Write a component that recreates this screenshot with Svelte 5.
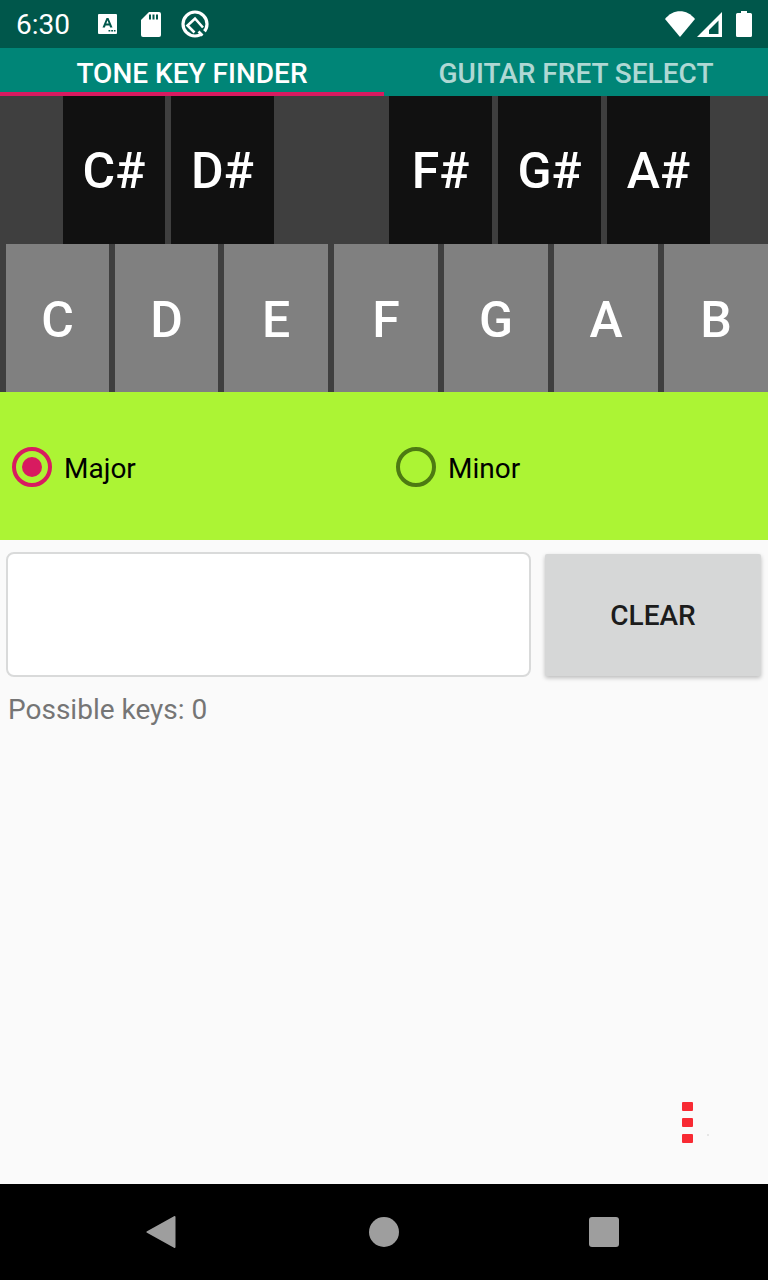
<script lang="ts">
	const blackKeys = ['C#', 'D#', '', 'F#', 'G#', 'A#'];
	const whiteKeys = ['C', 'D', 'E', 'F', 'G', 'A', 'B'];

	let scale = $state('major');
	let picked = $state('');
	let count = $derived(picked ? 1 : 0);
</script>

<div class="screen">
	<div class="status-bar">
		<span class="time">6:30</span>
		<svg class="note-icon" width="19" height="20" viewBox="0 0 19 20">
			<rect width="19" height="20" rx="1" fill="#fff" />
			<path d="M4.500 13.500L8.500 4h2l4 9.500h-2.400l-.7-2H7.600l-.7 2zM8.300 9.500h2.400L9.500 6.300z" fill="#00574b" fill-rule="evenodd" />
			<path d="M10.500 16h1.800v1.500h-1.800zM13.200 16H15v1.500h-1.800zM15.900 16h1.600v1.500h-1.600z" fill="#00574b" />
		</svg>
		<svg class="sd-icon" width="20" height="25" viewBox="0 0 20 25">
			<path d="M8 0h10a2 2 0 0 1 2 2v21a2 2 0 0 1-2 2H2a2 2 0 0 1-2-2V8z" fill="#fff" />
			<path d="M8 2.500h2v5H8zM11.500 2.500h2v5h-2zM15 2.500h2v5h-2z" fill="#00574b" />
		</svg>
		<svg class="q-icon" width="28" height="28" viewBox="0 0 28 28">
			<circle cx="14" cy="14" r="12" fill="none" stroke="#fff" stroke-width="3.200" />
			<path d="M19 20L27 27" stroke="#00574b" stroke-width="4" />
			<path d="M13.500 22.500L6.500 15.500 14 8.500l8 9" fill="none" stroke="#fff" stroke-width="2.600" />
			<path d="M17.500 21.500l4 4" stroke="#fff" stroke-width="2.600" />
		</svg>
		<span class="spacer"></span>
		<svg class="wifi-icon" width="30" height="26" viewBox="0 0 30 26">
			<path d="M0 8C8-2.500 22-2.500 30 8L15 26z" fill="#fff" />
		</svg>
		<svg class="signal-icon" width="25" height="25" viewBox="0 0 25 25">
			<path d="M25 0v25H0zM21.500 8.500L12 18v4h9.500z" fill="#fff" fill-rule="evenodd" />
		</svg>
		<svg class="battery-icon" width="16" height="26" viewBox="0 0 16 26">
			<path d="M5 0h6v2h3.500A1.500 1.500 0 0 1 16 3.500v21a1.500 1.500 0 0 1-1.500 1.500h-13A1.500 1.500 0 0 1 0 24.500v-21A1.500 1.500 0 0 1 1.500 2H5z" fill="#fff" />
		</svg>
	</div>

	<div class="tabs">
		<div class="tab active">TONE KEY FINDER</div>
		<div class="tab">GUITAR FRET SELECT</div>
	</div>

	<div class="keyboard">
		<div class="black-row">
			<span></span>
			{#each blackKeys as key}
				{#if key}
					<button class="key black" onclick={() => (picked = key)}>{key}</button>
				{:else}
					<span></span>
				{/if}
			{/each}
			<span></span>
		</div>
		<div class="white-row">
			{#each whiteKeys as key}
				<button class="key white" onclick={() => (picked = key)}>{key}</button>
			{/each}
		</div>
	</div>

	<div class="scale-row">
		<button class="radio-item" onclick={() => (scale = 'major')}>
			<span class="radio" class:checked={scale === 'major'}></span>
			<span class="radio-label">Major</span>
		</button>
		<button class="radio-item" onclick={() => (scale = 'minor')}>
			<span class="radio" class:checked={scale === 'minor'}></span>
			<span class="radio-label">Minor</span>
		</button>
	</div>

	<div class="content">
		<div class="input-row">
			<div class="key-box">{picked}</div>
			<button class="clear" onclick={() => (picked = '')}>CLEAR</button>
		</div>
		<div class="result">Possible keys: {count}</div>
		<div class="dots">
			<span></span>
			<span></span>
			<span></span>
		</div>
		<span class="speck"></span>
	</div>

	<div class="nav-bar">
		<svg width="30" height="32" viewBox="0 0 30 32">
			<path d="M28.500 1L1.500 16l27 15z" fill="#9e9e9e" stroke="#9e9e9e" stroke-width="2" stroke-linejoin="round" />
		</svg>
		<span class="nav-home"></span>
		<span class="nav-recent"></span>
	</div>
</div>

<style>
	:global(body) {
		background: #fafafa;
	}

	.screen {
		display: flex;
		flex-direction: column;
		width: 768px;
		height: 1280px;
		font-family: Roboto, 'Liberation Sans', sans-serif;
		background: #fafafa;
		overflow: hidden;
	}

	button {
		font-family: inherit;
		border: none;
		padding: 0;
		margin: 0;
	}

	.status-bar {
		display: flex;
		align-items: center;
		flex: none;
		height: 48px;
		padding: 0 16px;
		background: #00574b;
		box-sizing: border-box;
	}

	.time {
		width: 80px;
		font-size: 28px;
		color: #fff;
	}

	.note-icon {
		margin-left: 2px;
	}

	.sd-icon {
		margin-left: 24px;
	}

	.q-icon {
		margin-left: 20px;
	}

	.spacer {
		flex: 1;
	}

	.signal-icon {
		margin-left: 2px;
	}

	.battery-icon {
		margin-left: 14px;
	}

	.tabs {
		display: flex;
		flex: none;
		height: 48px;
		background: #008577;
	}

	.tab {
		flex: 1;
		display: flex;
		align-items: center;
		justify-content: center;
		padding-top: 2px;
		font-size: 28px;
		font-weight: 500;
		color: rgba(255, 255, 255, 0.7);
	}

	.tab.active {
		color: #fff;
		box-shadow: inset 0 -4px 0 #d81b60;
	}

	.keyboard {
		flex: none;
		background: #3f3f3f;
	}

	.black-row,
	.white-row {
		display: grid;
		gap: 6px;
		height: 148px;
	}

	.black-row {
		grid-template-columns: 57px 102px repeat(5, 103px) 52px;
	}

	.white-row {
		grid-template-columns: 103px 103px repeat(5, 104px);
		padding-left: 6px;
	}

	.key {
		font-size: 50px;
		font-weight: 500;
		color: #fff;
	}

	.key.black {
		padding-top: 2px;
		background: #111;
	}

	.key.white {
		padding-top: 4px;
		background: #808080;
	}

	.scale-row {
		display: flex;
		flex: none;
		align-items: center;
		height: 148px;
		padding-top: 2px;
		box-sizing: border-box;
		background: #acf434;
	}

	.radio-item {
		flex: 1;
		display: flex;
		align-items: center;
		gap: 12px;
		padding-left: 12px;
		background: none;
		font-size: 28px;
		color: #000;
	}

	.radio-label {
		padding-top: 2px;
	}

	.radio {
		box-sizing: border-box;
		display: flex;
		align-items: center;
		justify-content: center;
		width: 40px;
		height: 40px;
		border: 4px solid #4d7a12;
		border-radius: 50%;
	}

	.radio.checked {
		border-color: #d81b60;
	}

	.radio.checked::after {
		content: '';
		width: 20px;
		height: 20px;
		border-radius: 50%;
		background: #d81b60;
	}

	.content {
		position: relative;
		flex: 1;
		padding: 12px 6px 0;
	}

	.input-row {
		display: flex;
		align-items: center;
		gap: 14px;
	}

	.key-box {
		box-sizing: border-box;
		width: 525px;
		height: 125px;
		background: #fff;
		border: 2px solid #d9dada;
		border-radius: 8px;
	}

	.clear {
		width: 216px;
		height: 122px;
		padding-top: 2px;
		background: #d6d7d7;
		border-radius: 2px;
		box-shadow: 0 2px 4px rgba(0, 0, 0, 0.25);
		font-size: 28px;
		font-weight: 500;
		color: #1c1c1c;
	}

	.result {
		margin-top: 16px;
		padding-left: 2px;
		font-size: 28px;
		color: #757575;
	}

	.dots {
		position: absolute;
		left: 682px;
		top: 562px;
		display: flex;
		flex-direction: column;
		gap: 7px;
	}

	.dots span {
		width: 11px;
		height: 9px;
		background: #f82a33;
		border-radius: 1px;
	}

	.speck {
		position: absolute;
		left: 707px;
		top: 594px;
		width: 2px;
		height: 2px;
		background: #e6e6e6;
	}

	.nav-bar {
		position: relative;
		flex: none;
		height: 96px;
		background: #000;
	}

	.nav-bar svg {
		position: absolute;
		left: 146px;
		top: 32px;
	}

	.nav-home {
		position: absolute;
		left: 369px;
		top: 33px;
		width: 30px;
		height: 30px;
		border-radius: 50%;
		background: #9e9e9e;
	}

	.nav-recent {
		position: absolute;
		left: 589px;
		top: 33px;
		width: 30px;
		height: 30px;
		border-radius: 3px;
		background: #9e9e9e;
	}
</style>
